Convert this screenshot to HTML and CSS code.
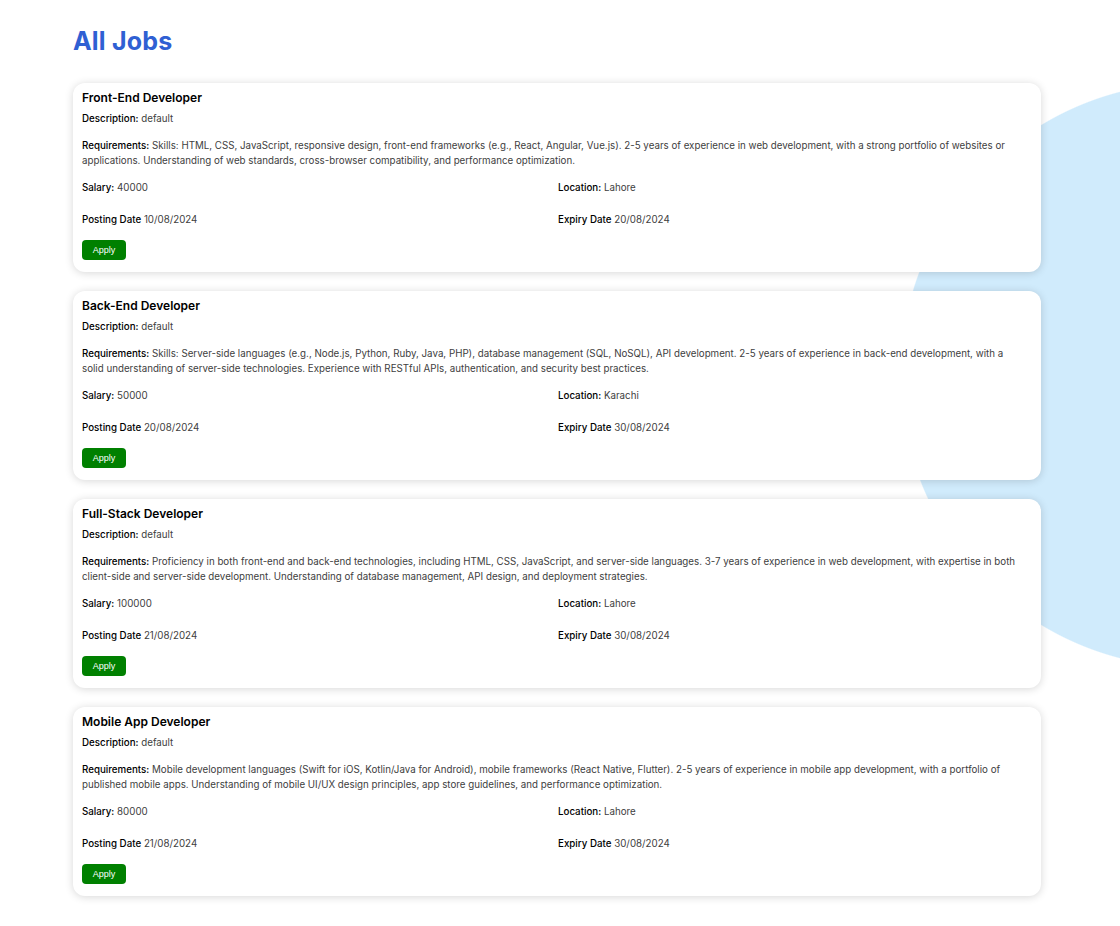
FILE: index.html
```html
<!DOCTYPE html>
<html>
<head>
<meta charset="utf-8">
<link rel="stylesheet" href="styles.css">
</head>
<body>
<main class="page">
  <h1 class="page-title">All Jobs</h1>
  <div class="job-list">
    <section class="job-card">
      <h3 class="job-title">Front-End Developer</h3>
      <p class="desc"><span class="lbl">Description:</span> default</p>
      <p class="req"><span class="lbl">Requirements:</span> Skills: HTML, CSS, JavaScript, responsive design, front-end frameworks (e.g., React, Angular, Vue.js). 2-5 years of experience in web development, with a strong portfolio of websites or applications. Understanding of web standards, cross-browser compatibility, and performance optimization.</p>
      <div class="meta">
        <p><span class="lbl">Salary:</span> 40000</p>
        <p><span class="lbl">Location:</span> Lahore</p>
        <p><span class="lbl">Posting Date</span> 10/08/2024</p>
        <p><span class="lbl">Expiry Date</span> 20/08/2024</p>
      </div>
      <button class="apply">Apply</button>
    </section>
    <section class="job-card">
      <h3 class="job-title">Back-End Developer</h3>
      <p class="desc"><span class="lbl">Description:</span> default</p>
      <p class="req"><span class="lbl">Requirements:</span> Skills: Server-side languages (e.g., Node.js, Python, Ruby, Java, PHP), database management (SQL, NoSQL), API development. 2-5 years of experience in back-end development, with a<br>solid understanding of server-side technologies. Experience with RESTful APIs, authentication, and security best practices.</p>
      <div class="meta">
        <p><span class="lbl">Salary:</span> 50000</p>
        <p><span class="lbl">Location:</span> Karachi</p>
        <p><span class="lbl">Posting Date</span> 20/08/2024</p>
        <p><span class="lbl">Expiry Date</span> 30/08/2024</p>
      </div>
      <button class="apply">Apply</button>
    </section>
    <section class="job-card">
      <h3 class="job-title">Full-Stack Developer</h3>
      <p class="desc"><span class="lbl">Description:</span> default</p>
      <p class="req"><span class="lbl">Requirements:</span> Proficiency in both front-end and back-end technologies, including HTML, CSS, JavaScript, and server-side languages. 3-7 years of experience in web development, with expertise in both client-side and server-side development. Understanding of database management, API design, and deployment strategies.</p>
      <div class="meta">
        <p><span class="lbl">Salary:</span> 100000</p>
        <p><span class="lbl">Location:</span> Lahore</p>
        <p><span class="lbl">Posting Date</span> 21/08/2024</p>
        <p><span class="lbl">Expiry Date</span> 30/08/2024</p>
      </div>
      <button class="apply">Apply</button>
    </section>
    <section class="job-card">
      <h3 class="job-title">Mobile App Developer</h3>
      <p class="desc"><span class="lbl">Description:</span> default</p>
      <p class="req"><span class="lbl">Requirements:</span> Mobile development languages (Swift for iOS, Kotlin/Java for Android), mobile frameworks (React Native, Flutter). 2-5 years of experience in mobile app development, with a portfolio of published mobile apps. Understanding of mobile UI/UX design principles, app store guidelines, and performance optimization.</p>
      <div class="meta">
        <p><span class="lbl">Salary:</span> 80000</p>
        <p><span class="lbl">Location:</span> Lahore</p>
        <p><span class="lbl">Posting Date</span> 21/08/2024</p>
        <p><span class="lbl">Expiry Date</span> 30/08/2024</p>
      </div>
      <button class="apply">Apply</button>
    </section>
  </div>
</main>
</body>
</html>
```
FILE: styles.css
```css
html, body {
  margin: 0;
  padding: 0;
}
body {
  font-family: "Inter", "Open Sans", sans-serif;
  color: #000;
  min-height: 926px;
  background-color: #ffffff;
  background-image: radial-gradient(circle 293px at 1193px 375px, #d0ebfc 99.6%, rgba(208, 235, 252, 0) 100%);
  background-repeat: no-repeat;
}
.page {
  padding: 24px 0 20px 73px;
  width: 968px;
}
.page-title {
  margin: 0;
  font-size: 25px;
  line-height: 34px;
  font-weight: 700;
  color: #2f60d3;
  letter-spacing: 0.2px;
}
.job-list {
  margin-top: 25px;
  display: flex;
  flex-direction: column;
  gap: 19px;
}
.job-card {
  background: #fff;
  border-radius: 12px;
  box-shadow: 0 1px 8px rgba(0, 0, 0, 0.16);
  padding: 6px 9px 12px;
}
.job-title {
  margin: 0;
  font-size: 12px;
  line-height: 18px;
  font-weight: 600;
}
.desc, .req, .meta p {
  margin: 0;
  font-size: 9.75px;
  line-height: 15px;
  color: #404040;
}
.lbl {
  color: #000;
  font-weight: 500;
}
.desc { margin-top: 4px; }
.req { margin-top: 12px; }
.meta {
  margin-top: 12px;
  display: grid;
  grid-template-columns: 1fr 1fr;
  column-gap: 2px;
  row-gap: 17px;
}
.apply {
  display: block;
  margin-top: 13px;
  width: 44px;
  height: 20px;
  border: 0;
  border-radius: 4px;
  background: #008000;
  color: #fff;
  font-family: "Liberation Sans", Arial, sans-serif;
  font-size: 9px;
  padding: 0;
}
```
